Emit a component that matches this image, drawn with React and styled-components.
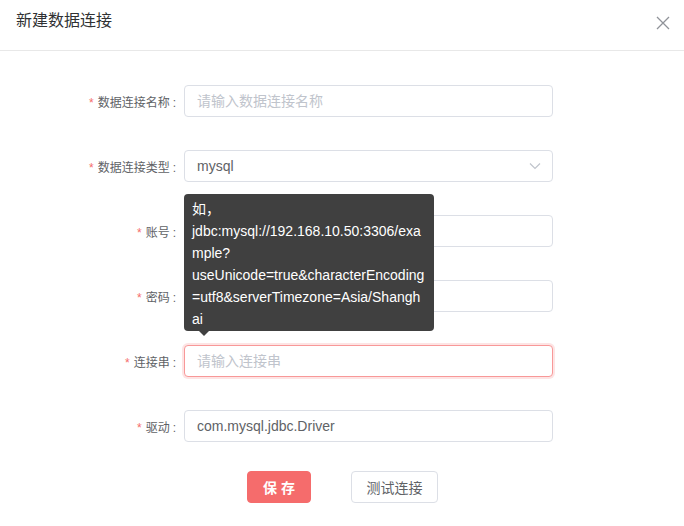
import React from 'react'
import styled, { createGlobalStyle } from 'styled-components'

const GlobalStyle = createGlobalStyle`
  html, body {
    margin: 0;
    padding: 0;
    background: #fff;
  }
  body {
    font-family: "Liberation Sans", "Noto Sans CJK SC", sans-serif;
    color: #606266;
  }
  * { box-sizing: border-box; }
`

const Dialog = styled.div`
  width: 684px;
  height: 526px;
  background: #fff;
  display: flex;
  flex-direction: column;
`

const Header = styled.div`
  height: 51px;
  padding: 9px 13px 0 16px;
  border-bottom: 1px solid #e8e8e8;
  display: flex;
  justify-content: space-between;
  align-items: flex-start;
`

const Title = styled.span`
  font-size: 16px;
  line-height: 24px;
  color: #303133;
`

const Close = styled.button`
  border: none;
  background: transparent;
  padding: 0;
  margin-top: 6px;
  width: 16px;
  height: 16px;
  cursor: pointer;
  display: flex;
  align-items: center;
  justify-content: center;
`

const Form = styled.form`
  padding-top: 34px;
  display: flex;
  flex-direction: column;
`

const Item = styled.div`
  position: relative;
  display: flex;
  align-items: center;
  height: 32px;
  margin-bottom: 33px;
`

const Label = styled.label`
  width: 184px;
  padding-right: 8px;
  text-align: right;
  font-size: 12px;
  color: #606266;
  &::before {
    content: '*';
    color: #f56c6c;
    margin-right: 4px;
  }
  &::after {
    content: ':';
    margin-left: 3px;
  }
`

const Field = styled.div`
  position: relative;
  width: 369px;
  height: 32px;
`

const Input = styled.input`
  width: 100%;
  height: 32px;
  border: 1px solid ${p => (p.$error ? '#f89898' : '#dcdfe6')};
  box-shadow: ${p => (p.$error ? '0 0 0 2px rgba(245,108,108,0.18)' : 'none')};
  border-radius: 4px;
  padding: 0 12px;
  font-family: inherit;
  font-size: 14px;
  color: #606266;
  outline: none;
  background: #fff;
  &::placeholder {
    color: #c0c4cc;
  }
`

const Arrow = styled.span`
  position: absolute;
  right: 12px;
  top: 0;
  height: 32px;
  display: flex;
  align-items: center;
`

const Tip = styled.div`
  position: absolute;
  left: 184px;
  bottom: 46px;
  width: 250px;
  padding: 4px 8px 1px;
  background: #404040;
  border-radius: 4px;
  color: #fff;
  font-size: 14px;
  line-height: 22px;
  overflow-wrap: anywhere;
  z-index: 2;
  &::after {
    content: '';
    position: absolute;
    left: 15px;
    bottom: -5px;
    border-left: 5px solid transparent;
    border-right: 5px solid transparent;
    border-top: 5px solid #404040;
  }
`

const Actions = styled.div`
  margin-top: -4px;
  display: flex;
  justify-content: center;
  gap: 40px;
  padding-left: 1px;
`

const Button = styled.button`
  height: 32px;
  padding: 0;
  white-space: nowrap;
  border-radius: 4px;
  font-family: inherit;
  font-size: 14px;
  cursor: pointer;
  border: 1px solid ${p => (p.$primary ? '#f56c6c' : '#dcdfe6')};
  background: ${p => (p.$primary ? '#f56c6c' : '#fff')};
  color: ${p => (p.$primary ? '#fff' : '#606266')};
  font-weight: ${p => (p.$primary ? 600 : 400)};
  width: ${p => p.$w}px;
`

const rows = [
  { label: '数据连接名称', placeholder: '请输入数据连接名称' },
  { label: '数据连接类型', value: 'mysql', select: true },
  { label: '账号', placeholder: '请输入账号' },
  { label: '密码', placeholder: '请输入密码' },
  { label: '连接串', placeholder: '请输入连接串', error: true, tip: true },
  { label: '驱动', value: 'com.mysql.jdbc.Driver' },
]

export default function App() {
  return (
    <Dialog>
      <GlobalStyle />
      <Header>
        <Title>新建数据连接</Title>
        <Close type="button">
          <svg width="14" height="14" viewBox="0 0 14 14">
            <path d="M1 1L13 13M13 1L1 13" stroke="#909399" strokeWidth="1.3" fill="none" />
          </svg>
        </Close>
      </Header>
      <Form>
        {rows.map(r => (
          <Item key={r.label}>
            <Label>{r.label}</Label>
            <Field>
              <Input
                placeholder={r.placeholder}
                defaultValue={r.value}
                readOnly={r.select}
                $error={r.error}
              />
              {r.select && (
                <Arrow>
                  <svg width="12" height="8" viewBox="0 0 12 8">
                    <path d="M1 1.5L6 6.5L11 1.5" stroke="#c0c4cc" strokeWidth="1.2" fill="none" />
                  </svg>
                </Arrow>
              )}
            </Field>
            {r.tip && (
              <Tip>
                如，jdbc:mysql://192.168.10.50:3306/example?useUnicode=true&amp;characterEncoding=utf8&amp;serverTimezone=Asia/Shanghai
              </Tip>
            )}
          </Item>
        ))}
        <Actions>
          <Button type="button" $primary $w={64}>保 存</Button>
          <Button type="button" $w={87}>测试连接</Button>
        </Actions>
      </Form>
    </Dialog>
  )
}
